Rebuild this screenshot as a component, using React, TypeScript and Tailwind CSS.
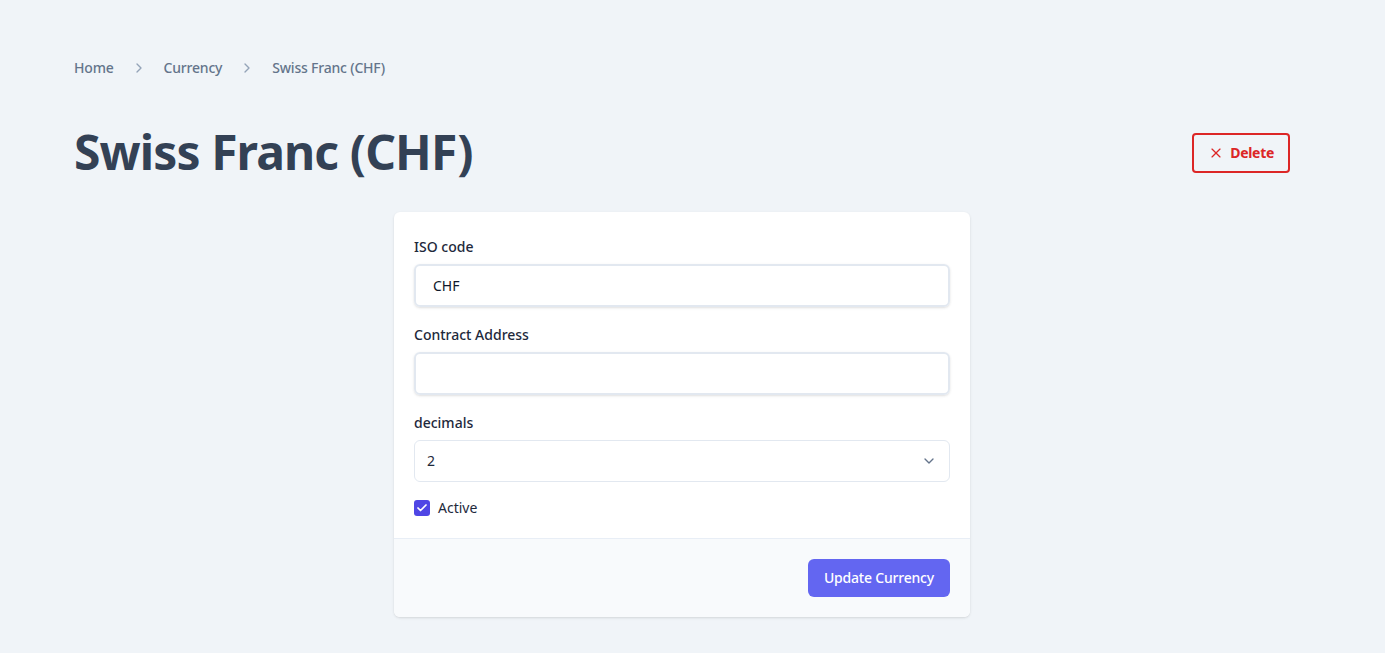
import { Check, ChevronDown, ChevronRight, X } from "lucide-react";

const font = { fontFamily: '"Noto Sans", "Open Sans", sans-serif' };

export default function App() {
  return (
    <div className="min-h-screen bg-[#f0f4f8] text-[#334155]" style={font}>
      <div className="w-[1216px] ml-[74px] pt-[57px]">
        {/* Breadcrumb */}
        <nav className="flex items-center text-sm font-medium text-[#64748b] h-[22px] tracking-[-0.2px]">
          <span>Home</span>
          <ChevronRight className="w-4 h-4 mx-[17px] text-[#94a3b8]" strokeWidth={2} />
          <span>Currency</span>
          <ChevronRight className="w-4 h-4 mx-[17px] text-[#94a3b8]" strokeWidth={2} />
          <span>Swiss Franc (CHF)</span>
        </nav>

        {/* Header */}
        <div className="flex items-center justify-between mt-[44px] h-[58px]">
          <h1 className="text-5xl font-bold text-[#334155] tracking-[-0.9px]">Swiss Franc (CHF)</h1>
          <button className="mt-[2px] flex items-center gap-1.5 h-[40px] px-[14px] border-2 border-[#dc2626] rounded text-[#dc2626] text-sm font-bold bg-transparent tracking-[-0.3px]">
            <X className="w-4 h-4" strokeWidth={1.75} />
            Delete
          </button>
        </div>

        {/* Card */}
        <div className="mx-auto mt-[31px] w-[576px] bg-white rounded-md shadow-sm overflow-hidden">
          <div className="p-5 pb-[20px]">
            <label className="block text-sm font-medium text-[#1e293b] leading-5 mt-[5px]">ISO code</label>
            <input
              defaultValue="CHF"
              className="mt-[7px] w-full h-[43px] px-[17px] rounded-md border-2 border-[#e2e8f0] shadow-sm text-sm text-[#0f172a] outline-none"
            />

            <label className="block text-sm font-medium text-[#1e293b] leading-5 mt-[18px]">Contract Address</label>
            <input className="mt-[7px] w-full h-[43px] px-[17px] rounded-md border-2 border-[#e2e8f0] shadow-sm text-sm outline-none" />

            <label className="block text-sm font-medium text-[#1e293b] leading-5 mt-[18px]">decimals</label>
            <div className="mt-[7px] relative">
              <div className="w-full h-[42px] px-3 flex items-center justify-between rounded-md border border-[#e2e8f0] text-sm text-[#1e293b]">
                <span>2</span>
                <ChevronDown className="w-4 h-4 text-[#64748b]" strokeWidth={2} />
              </div>
            </div>

            <div className="flex items-center gap-2 mt-[16px]">
              <span className="w-4 h-4 rounded-[3px] bg-[#4f46e5] flex items-center justify-center">
                <Check className="w-3 h-3 text-white" strokeWidth={3.5} />
              </span>
              <span className="text-sm text-[#1e293b]">Active</span>
            </div>
          </div>

          <div className="bg-[#f8fafc] border-t border-[#e8eef6] h-[79px] flex items-center justify-end px-5">
            <button className="h-[38px] px-4 rounded-md bg-[#6366f1] text-white text-sm font-medium tracking-[-0.2px]">
              Update Currency
            </button>
          </div>
        </div>
      </div>
    </div>
  );
}
